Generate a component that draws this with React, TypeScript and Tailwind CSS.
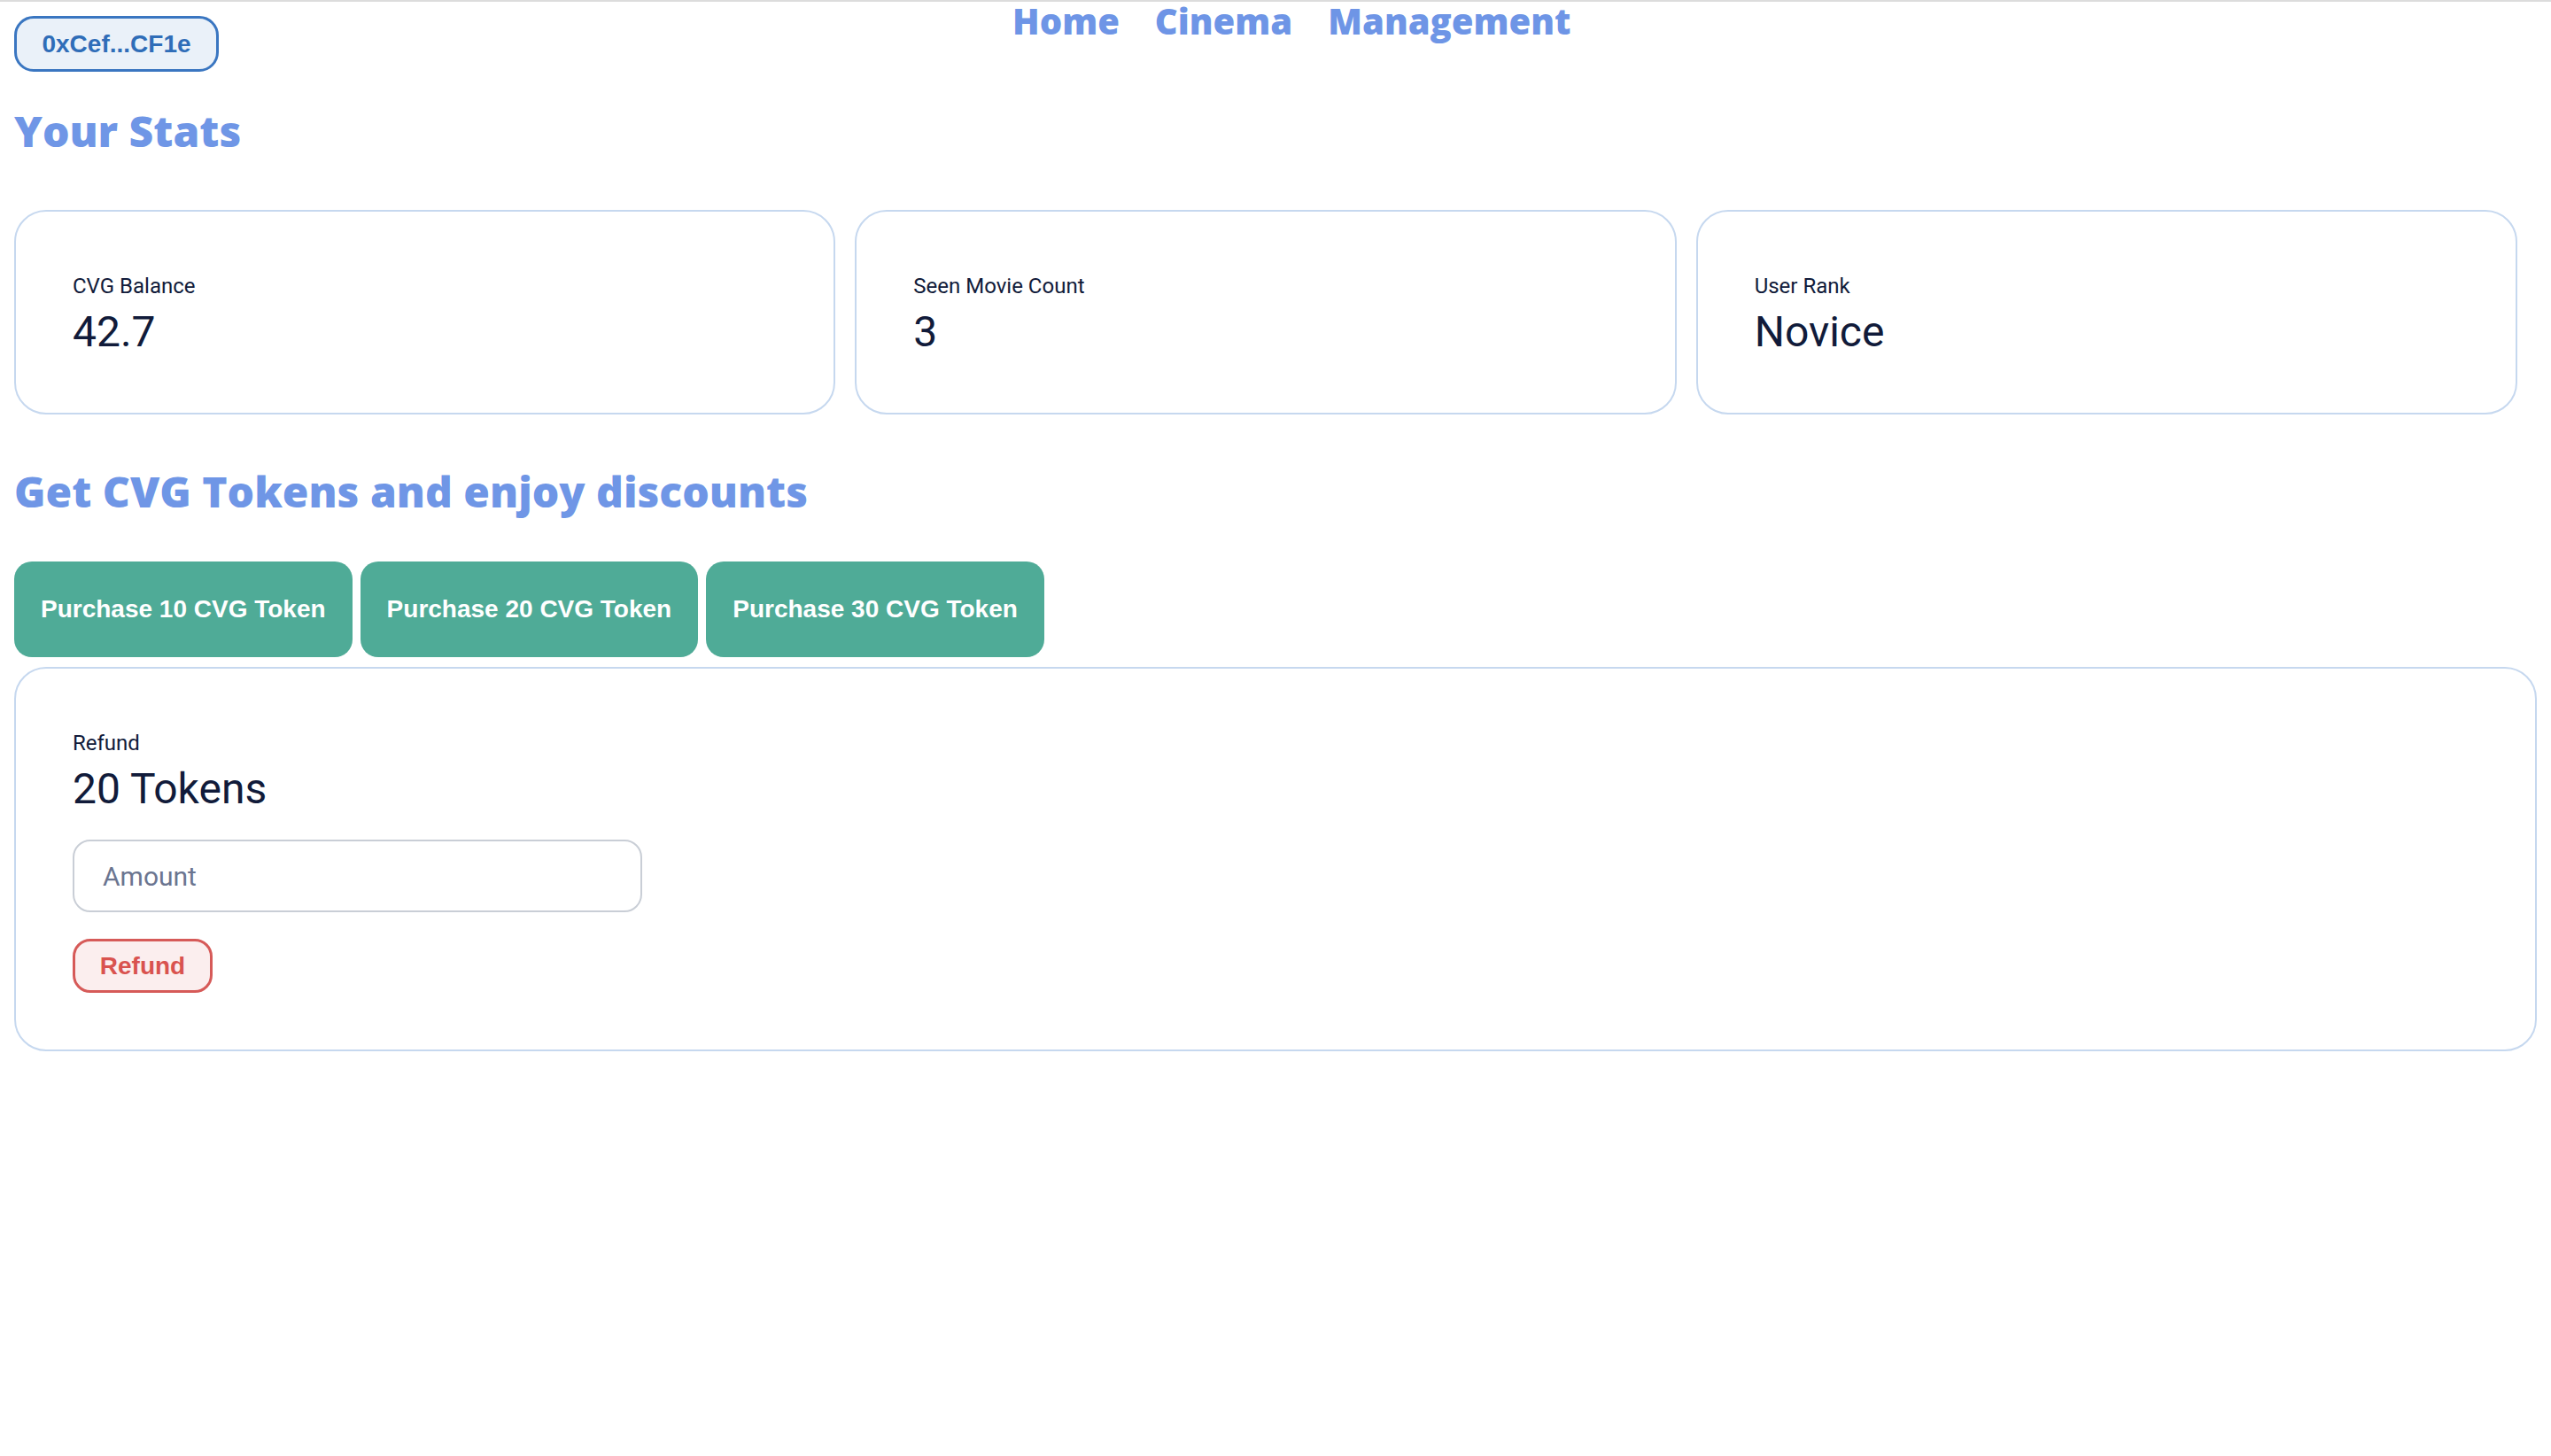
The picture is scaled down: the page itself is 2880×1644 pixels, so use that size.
import React from "react";

const headingCls =
  "font-['Open_Sans',sans-serif] font-extrabold text-[48px] leading-none text-[#6f96e6]";
const labelCls = "font-['Roboto',sans-serif] text-[24px] leading-[1.5] text-[#111b3a]";
const valueCls = "font-['Roboto',sans-serif] text-[48px] leading-none text-[#111b3a] mt-[10px]";

function StatCard({ label, value }: { label: string; value: string }) {
  return (
    <div className="h-[231px] rounded-[36px] border-2 border-[#c6d8ef] bg-white pl-[64px] pt-[66px]">
      <div className={labelCls}>{label}</div>
      <div className={valueCls}>{value}</div>
    </div>
  );
}

export default function App() {
  return (
    <div className="min-h-screen bg-white">
      <div className="h-[2px] bg-[#dcdcdc]" />
      <div className="px-[16px]">
        {/* Header */}
        <div className="flex items-start">
          <button className="mt-[16px] h-[63px] w-[231px] rounded-[22px] border-[3px] border-[#3a76c1] bg-[#eaf1f9] font-['Liberation_Sans',Arial,sans-serif] text-[28px] font-bold text-[#2f6db8]">
            0xCef...CF1e
          </button>
          <nav className="ml-[896px] mt-[2px] flex gap-[40px] font-['Open_Sans',sans-serif] text-[40px] font-extrabold leading-none text-[#6e95e6]">
            <a>Home</a>
            <a>Cinema</a>
            <a>Management</a>
          </nav>
        </div>

        {/* Your Stats */}
        <h1 className={`${headingCls} mt-[43px]`}>Your Stats</h1>
        <div className="mt-[65px] grid w-[2826px] grid-cols-3 gap-[22px]">
          <StatCard label="CVG Balance" value="42.7" />
          <StatCard label="Seen Movie Count" value="3" />
          <StatCard label="User Rank" value="Novice" />
        </div>

        {/* Get tokens */}
        <h2 className={`${headingCls} mt-[63px]`}>Get CVG Tokens and enjoy discounts</h2>
        <div className="mt-[55px] flex gap-[9px]">
          <button className="h-[108px] rounded-[20px] bg-[#4fab97] px-[30px] font-['Liberation_Sans',Arial,sans-serif] text-[28px] font-bold text-white">
            Purchase 10 CVG Token
          </button>
          <button className="h-[108px] rounded-[20px] bg-[#4fab97] px-[30px] font-['Liberation_Sans',Arial,sans-serif] text-[28px] font-bold text-white">
            Purchase 20 CVG Token
          </button>
          <button className="h-[108px] rounded-[20px] bg-[#4fab97] px-[30px] font-['Liberation_Sans',Arial,sans-serif] text-[28px] font-bold text-white">
            Purchase 30 CVG Token
          </button>
        </div>

        {/* Refund */}
        <div className="mt-[11px] flex flex-col items-start rounded-[36px] border-2 border-[#c6d8ef] pb-[64px] pl-[64px] pt-[66px]">
          <div className={labelCls}>Refund</div>
          <div className={valueCls}>20 Tokens</div>
          <input
            placeholder="Amount"
            className="mt-[33px] h-[82px] w-[643px] rounded-[20px] border-2 border-[#c9ced6] px-[32px] font-['Roboto',sans-serif] text-[30px] text-[#111b3a] outline-none placeholder:text-[#6b7590]"
          />
          <button className="mt-[30px] h-[61px] w-[158px] rounded-[20px] border-[3px] border-[#d65a58] bg-[#fbeeee] font-['Liberation_Sans',Arial,sans-serif] text-[28px] font-bold text-[#d9534f]">
            Refund
          </button>
        </div>
      </div>
    </div>
  );
}
